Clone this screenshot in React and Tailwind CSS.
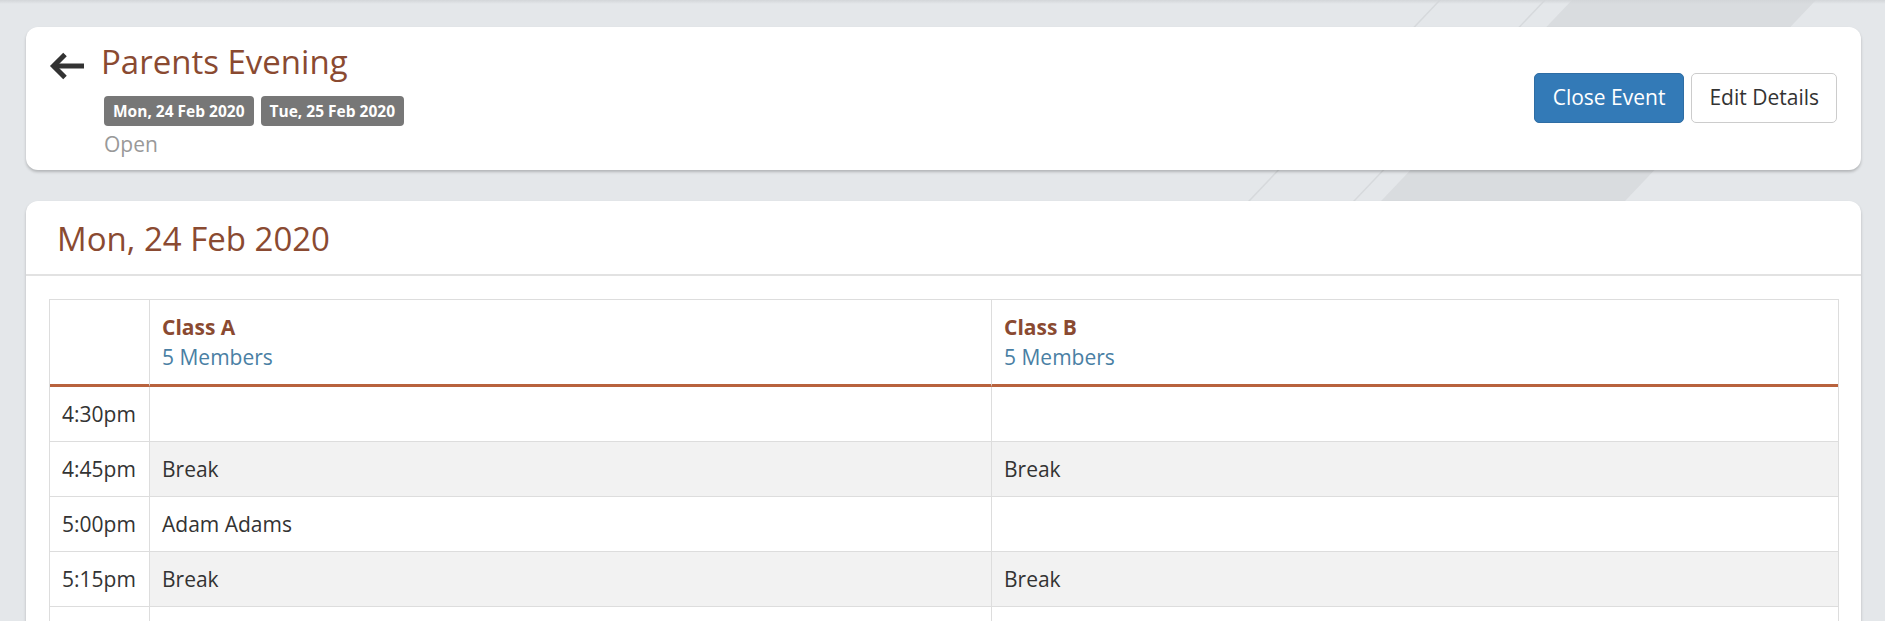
import React from 'react';

const slots = [
  { time: '4:30pm', a: '', b: '' },
  { time: '4:45pm', a: 'Break', b: 'Break' },
  { time: '5:00pm', a: 'Adam Adams', b: '' },
  { time: '5:15pm', a: 'Break', b: 'Break' },
  { time: '5:30pm', a: '', b: '' },
  { time: '5:45pm', a: '', b: '' },
];

function BackArrow() {
  return (
    <svg width="36" height="28" viewBox="0 0 36 28" className="shrink-0 mt-[10px] -ml-[1px]">
      <path d="M4 14H35" stroke="#333" strokeWidth="5" fill="none" />
      <path d="M16 2.5L4.5 14L16 25.5" stroke="#333" strokeWidth="5" fill="none" strokeLinejoin="miter" />
    </svg>
  );
}

function Cell({ text, first }) {
  const isBreak = text === 'Break';
  return (
    <div
      className={`px-[12px] py-[12px] leading-[30px] text-[21px] text-[#333] border-b border-[#ddd] ${first ? '' : 'border-l'} ${isBreak ? 'bg-[#f2f2f2]' : 'bg-white'}`}
    >
      {text || '\u00a0'}
    </div>
  );
}

export default function App() {
  return (
    <div className="relative min-h-screen overflow-hidden bg-[#e4e7ea]" style={{ fontFamily: '"Open Sans", "Noto Sans", sans-serif' }}>
      {/* background stripes */}
      <svg className="absolute top-0 left-0 pointer-events-none" width="1885" height="621" viewBox="0 0 1885 621">
        <polygon points="1572,0 1816,0 1226,621 982,621" fill="#d9dcdf" />
        <line x1="1440" y1="0" x2="850" y2="621" stroke="#d6d9dc" strokeWidth="1.5" />
        <line x1="1545" y1="0" x2="955" y2="621" stroke="#d6d9dc" strokeWidth="1.5" />
      </svg>
      <div className="absolute top-0 left-0 right-0 h-[4px] bg-gradient-to-b from-[#d3d6d9] to-transparent" />

      <div className="relative pt-[27px] pl-[26px] pr-[24px] flex flex-col gap-[31px]">
        {/* event header card */}
        <div className="bg-white rounded-[12px] shadow-[0_2px_3px_rgba(0,0,0,0.22)] flex items-center justify-between pl-[24px] pr-[24px] pt-[15px] pb-[11px]">
          <div className="flex items-start gap-[16px]">
            <BackArrow />
            <div className="flex flex-col">
              <h1 className="text-[33px] leading-[40px] text-[#8a4a31] font-normal">Parents Evening</h1>
              <div className="flex gap-[7px] mt-[14px] ml-[3px]">
                <span className="bg-[#777] text-white font-bold text-[15.5px] leading-[30px] h-[30px] px-[9px] rounded-[4px]">Mon, 24 Feb 2020</span>
                <span className="bg-[#777] text-white font-bold text-[15.5px] leading-[30px] h-[30px] px-[9px] rounded-[4px]">Tue, 25 Feb 2020</span>
              </div>
              <div className="text-[21px] leading-[30px] text-[#999] mt-[3px] ml-[3px]">Open</div>
            </div>
          </div>
          <div className="flex gap-[7px] mb-[5px]">
            <button className="h-[50px] px-[18px] rounded-[5px] bg-[#337ab7] border border-[#2e6da4] text-white text-[21px]">Close Event</button>
            <button className="h-[50px] px-[17px] rounded-[5px] bg-white border border-[#ccc] text-[#333] text-[21px]">Edit Details</button>
          </div>
        </div>

        {/* day card */}
        <div className="bg-white rounded-t-[12px] shadow-[0_2px_3px_rgba(0,0,0,0.22)]">
          <div className="px-[31px] pt-[20px] pb-[17px] border-b-2 border-[#e2e2e2]">
            <h2 className="text-[33px] leading-[36px] text-[#8a4a31] font-normal">Mon, 24 Feb 2020</h2>
          </div>
          <div className="pl-[23px] pr-[22px] pt-[23px] pb-[24px]">
            <div className="border border-[#ddd] grid grid-cols-[99px_842px_1fr]">
              <div className="border-b-[3px] border-[#b8623d]" />
              <div className="border-l border-b-[3px] border-l-[#ddd] border-b-[#b8623d] px-[12px] py-[12px] text-[21px] leading-[30px]">
                <div className="font-bold text-[#8a4a31]">Class A</div>
                <div className="text-[#4a7fa4]">5 Members</div>
              </div>
              <div className="border-l border-b-[3px] border-l-[#ddd] border-b-[#b8623d] px-[12px] py-[12px] text-[21px] leading-[30px]">
                <div className="font-bold text-[#8a4a31]">Class B</div>
                <div className="text-[#4a7fa4]">5 Members</div>
              </div>
              {slots.map((s) => (
                <React.Fragment key={s.time}>
                  <Cell text={s.time} first />
                  <Cell text={s.a} />
                  <Cell text={s.b} />
                </React.Fragment>
              ))}
            </div>
          </div>
        </div>
      </div>
    </div>
  );
}
